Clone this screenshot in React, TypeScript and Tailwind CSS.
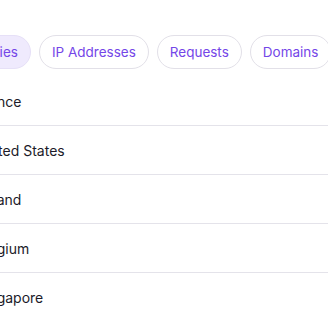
import React from "react";

const tabs = [
  { label: "Countries", active: true },
  { label: "IP Addresses", active: false },
  { label: "Requests", active: false },
  { label: "Domains", active: false },
];

const rows = ["France", "United States", "Poland", "Belgium", "Singapore"];

export default function App() {
  return (
    <div
      className="w-[328px] h-[314px] overflow-hidden bg-white"
      style={{ fontFamily: "Inter, 'Noto Sans', sans-serif" }}
    >
      <div className="flex gap-2 pt-[35px] ml-[-57px] w-max">
        {tabs.map((t) => (
          <div
            key={t.label}
            className={
              "h-[34px] px-3 flex items-center rounded-full border text-[13.5px] whitespace-nowrap text-[#7446e8] " +
              (t.active
                ? "bg-[#efeafd] border-[#e6e0f7]"
                : "bg-white border-[#e2e0e8]")
            }
          >
            {t.label}
          </div>
        ))}
      </div>
      <div className="mt-2 ml-[-40px] w-[400px]">
        {rows.map((r) => (
          <div
            key={r}
            className="h-[49px] border-b border-[#e4e3ea] flex items-center pl-4 text-[14px] text-[#1c1b29]"
          >
            {r}
          </div>
        ))}
      </div>
    </div>
  );
}
